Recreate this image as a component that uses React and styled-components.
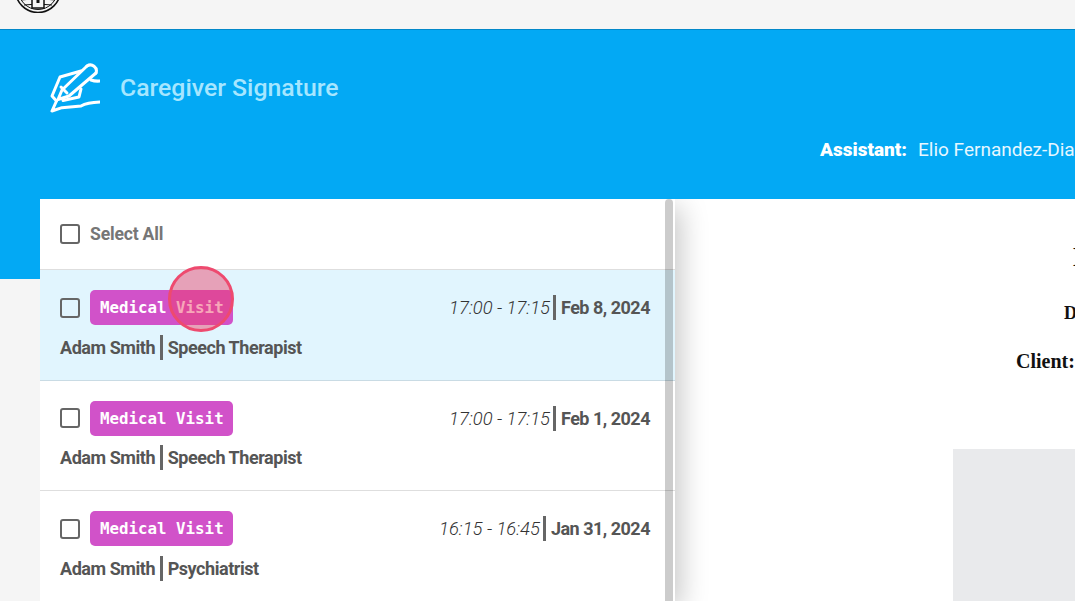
import React from "react"
import styled, {createGlobalStyle} from "styled-components"

const GlobalStyle = createGlobalStyle`
  html, body {
    margin: 0;
    height: 100%;
    overflow: hidden;
    background: #f5f5f5;
    font-family: Roboto, "Liberation Sans", sans-serif;
  }
`

const Page = styled.div`
  width: 1075px;
  height: 601px;
  overflow: hidden;
  display: flex;
  flex-direction: column;
`

const TopBar = styled.div`
  height: 29px;
  flex: none;
  overflow: hidden;
  display: flex;
  align-items: flex-end;
  padding: 0 0 16px 15px;
  box-sizing: border-box;
  background: #f5f5f5;
`

const Band = styled.header`
  height: 170px;
  flex: none;
  box-sizing: border-box;
  overflow: hidden;
  padding: 33px 0 0 50px;
  background: #03a9f4;
  border-top: 1px solid #0288c9;
`

const TitleRow = styled.div`
  display: flex;
  align-items: center;
  gap: 20px;
`

const Title = styled.h1`
  margin: 0 0 2px;
  font-size: 24.8px;
  font-weight: 500;
  color: #a6e6ff;
  white-space: nowrap;
`

const AssistantRow = styled.div`
  display: flex;
  gap: 11px;
  margin: 25px 0 0 770px;
  font-size: 19px;
  line-height: 24px;
  color: #e6f7ff;
  white-space: nowrap;
`

const AssistantLabel = styled.span`
  font-weight: 900;
  color: #fff;
`

const Body = styled.main`
  flex: 1;
  min-height: 0;
  display: flex;
  padding-left: 40px;
  background: linear-gradient(#03a9f4 80px, #f5f5f5 80px);
`

const List = styled.section`
  position: relative;
  z-index: 1;
  width: 635px;
  flex: none;
  background: #fff;
  box-shadow: 6px 8px 26px rgba(0, 0, 0, 0.22);
  clip-path: inset(0 -60px 0 0);
`

const ScrollThumb = styled.div`
  position: absolute;
  z-index: 2;
  top: 0;
  bottom: 0;
  right: 2px;
  width: 8px;
  border-radius: 4px 4px 0 0;
  background: rgba(0, 0, 0, 0.2);
`

const SelectAllRow = styled.div`
  height: 71px;
  box-sizing: border-box;
  display: flex;
  align-items: center;
  gap: 10px;
  padding-left: 20px;
  border-bottom: 1px solid #dedede;
  font-size: 17.6px;
  font-weight: 700;
  color: #767676;
  letter-spacing: -0.2px;
`

const Checkbox = styled.span`
  width: 20px;
  height: 20px;
  flex: none;
  box-sizing: border-box;
  border: 2px solid #666;
  border-radius: 3px;
  background: ${props => (props.$active ? "transparent" : "#fff")};
`

const Row = styled.article`
  position: relative;
  height: 110.6px;
  box-sizing: border-box;
  padding: 20px 25px 0 20px;
  border-bottom: 1px solid ${props => (props.$active ? "#c9dbe4" : "#dedede")};
  background: ${props => (props.$active ? "#e1f5fe" : "#fff")};
`

const RowTop = styled.div`
  display: flex;
  align-items: center;
  justify-content: space-between;
`

const RowStart = styled.div`
  display: flex;
  align-items: center;
  gap: 10px;
`

const Badge = styled.span`
  height: 35px;
  box-sizing: border-box;
  padding: 0 9px 0 10px;
  display: flex;
  align-items: center;
  border-radius: 5px;
  background: #d152c9;
  color: #fff;
  font-family: "DejaVu Sans Mono", "Liberation Mono", monospace;
  font-size: 15.8px;
  font-weight: 700;
  white-space: nowrap;
`

const When = styled.div`
  display: flex;
  align-items: center;
  color: #555;
  font-size: 18px;
`

const Time = styled.span`
  font-size: 18.4px;
  font-style: italic;
  font-weight: 300;
  color: #333;
`

const DateText = styled.span`
  font-weight: 700;
  letter-spacing: -0.5px;
`

const Bar = styled.span`
  width: 3px;
  height: 25px;
  margin: 0 5px 0 ${props => props.$lead}px;
  background: #666;
`

const RowBottom = styled.div`
  display: flex;
  align-items: center;
  margin-top: 9.8px;
  font-size: 18px;
  font-weight: 700;
  color: #555;
  letter-spacing: -0.45px;
`

const TapMark = styled.div`
  position: absolute;
  z-index: 3;
  top: -4px;
  left: 128px;
  width: 66px;
  height: 66px;
  box-sizing: border-box;
  border: 3px solid #ee4a6f;
  border-radius: 50%;
  background: rgba(238, 60, 100, 0.45);
`

const Doc = styled.section`
  flex: 1;
  min-width: 0;
  overflow: hidden;
  background: #fff;
  font-family: "Liberation Serif", "Times New Roman", serif;
  font-weight: 700;
  color: #111;
  white-space: nowrap;
`

const DocLine = styled.div`
  padding-left: ${props => props.$indent}px;
  margin-top: ${props => props.$top}px;
  font-size: ${props => props.$size}px;
  line-height: ${props => props.$height}px;
`

const SignatureBox = styled.div`
  margin: 76px 0 0 278px;
  height: 200px;
  background: #e9eaec;
`

const Logo = () => (
  <svg width="46" height="46" viewBox="0 0 46 46" fill="none" stroke="#111" style={{flex: "none"}}>
    <circle cx="23" cy="23" r="22.5" strokeWidth="1.6"/>
    <circle cx="23" cy="23" r="19.5" strokeWidth="1"/>
    <path d="M6 33Q23 30 40 33M9 38Q23 36 37 38" strokeWidth="1"/>
    <rect x="17" y="27" width="12" height="14" fill="#f5f5f5" strokeWidth="1.5"/>
    <rect x="21.5" y="31" width="3" height="5" fill="#111" stroke="none"/>
  </svg>
)

const SignIcon = () => (
  <svg width="50" height="50" viewBox="0 0 50 50" fill="none" stroke="#fff" strokeWidth="3" strokeLinejoin="round" strokeLinecap="round" style={{flex: "none"}}>
    <path d="M37 3L12 27L8 36.5L19 33L46 10"/>
    <path d="M37 3a6 6 0 0 1 9 7"/>
    <path d="M31 8L10 14L2 33L6.500 38"/>
    <path d="M11 24L17 30"/>
    <path d="M41 17Q45 18.500 50 18"/>
    <path d="M31 26L29 34L13 37.500"/>
    <path d="M6.500 38L2 48L12 44.700L31 43Q37 39.500 50 39"/>
  </svg>
)

const visits = [
  {time: "17:00 - 17:15", date: "Feb 8, 2024", role: "Speech Therapist", active: true},
  {time: "17:00 - 17:15", date: "Feb 1, 2024", role: "Speech Therapist"},
  {time: "16:15 - 16:45", date: "Jan 31, 2024", role: "Psychiatrist"},
]

const App = () => {
  return (
    <Page>
      <GlobalStyle/>
      <TopBar><Logo/></TopBar>
      <Band>
        <TitleRow>
          <SignIcon/>
          <Title>Caregiver Signature</Title>
        </TitleRow>
        <AssistantRow>
          <AssistantLabel>Assistant:</AssistantLabel>
          <span>Elio Fernandez-Diaz</span>
        </AssistantRow>
      </Band>
      <Body>
        <List>
          <ScrollThumb/>
          <SelectAllRow>
            <Checkbox/>
            Select All
          </SelectAllRow>
          {visits.map(visit => (
            <Row key={visit.date} $active={visit.active}>
              {visit.active && <TapMark/>}
              <RowTop>
                <RowStart>
                  <Checkbox $active={visit.active}/>
                  <Badge>Medical Visit</Badge>
                </RowStart>
                <When>
                  <Time>{visit.time}</Time>
                  <Bar $lead={3}/>
                  <DateText>{visit.date}</DateText>
                </When>
              </RowTop>
              <RowBottom>
                Adam Smith
                <Bar $lead={4.6}/>
                {visit.role}
              </RowBottom>
            </Row>
          ))}
        </List>
        <Doc>
          <DocLine $indent={398} $top={43} $size={27} $height={30}>Medical Visit</DocLine>
          <DocLine $indent={389} $top={29} $size={18} $height={24}>Date:</DocLine>
          <DocLine $indent={341} $top={24} $size={20} $height={24}>Client:</DocLine>
          <SignatureBox/>
        </Doc>
      </Body>
    </Page>
  )
}

export default App
